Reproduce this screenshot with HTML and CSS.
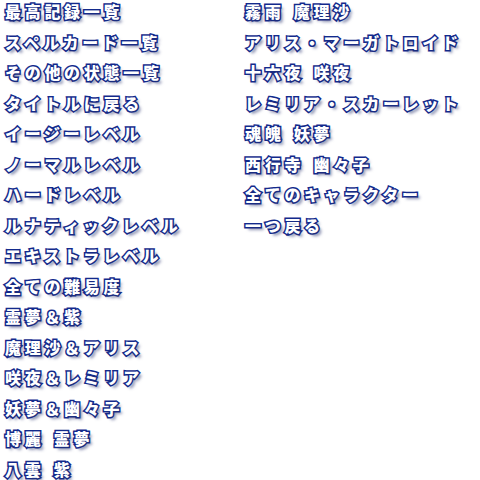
FILE: index.html
```html
<!DOCTYPE html>
<html lang="ja">
<head>
<meta charset="utf-8">
<link rel="stylesheet" href="styles.css">
</head>
<body>
<div class="menu">
  <ul class="col col-left">
    <li>最高記録一覧</li>
    <li>スペルカード一覧</li>
    <li>その他の状態一覧</li>
    <li>タイトルに戻る</li>
    <li>イージーレベル</li>
    <li>ノーマルレベル</li>
    <li>ハードレベル</li>
    <li>ルナティックレベル</li>
    <li>エキストラレベル</li>
    <li>全ての難易度</li>
    <li>霊夢＆紫</li>
    <li>魔理沙＆アリス</li>
    <li>咲夜＆レミリア</li>
    <li>妖夢＆幽々子</li>
    <li>博麗 霊夢</li>
    <li>八雲 紫</li>
  </ul>
  <ul class="col col-right">
    <li>霧雨 魔理沙</li>
    <li>アリス・マーガトロイド</li>
    <li>十六夜 咲夜</li>
    <li>レミリア・スカーレット</li>
    <li>魂魄 妖夢</li>
    <li>西行寺 幽々子</li>
    <li>全てのキャラクター</li>
    <li>一つ戻る</li>
  </ul>
</div>
</body>
</html>
```

FILE: styles.css
```css
html, body {
  margin: 0;
  padding: 0;
  background: #ffffff;
}
.menu {
  display: flex;
  width: 480px;
  height: 480px;
  overflow: hidden;
  box-sizing: border-box;
}
.col {
  list-style: none;
  margin: -4px 0 0 0;
  padding: 0;
}
.col-left {
  padding-left: 5px;
  width: 240px;
}
.col-right {
  padding-left: 0;
}
.col li {
  font-family: "Noto Sans CJK JP", "Noto Sans", sans-serif;
  font-weight: 900;
  font-size: 16px;
  line-height: 30.5px;
  height: 30.5px;
  letter-spacing: 3.7px;
  word-spacing: 2px;
  white-space: nowrap;
  color: #ffffff;
  -webkit-text-stroke: 3px #132a8c;
  paint-order: stroke fill;
  text-shadow: 3px 3px 3px rgba(40, 50, 110, 0.55);
}
```
